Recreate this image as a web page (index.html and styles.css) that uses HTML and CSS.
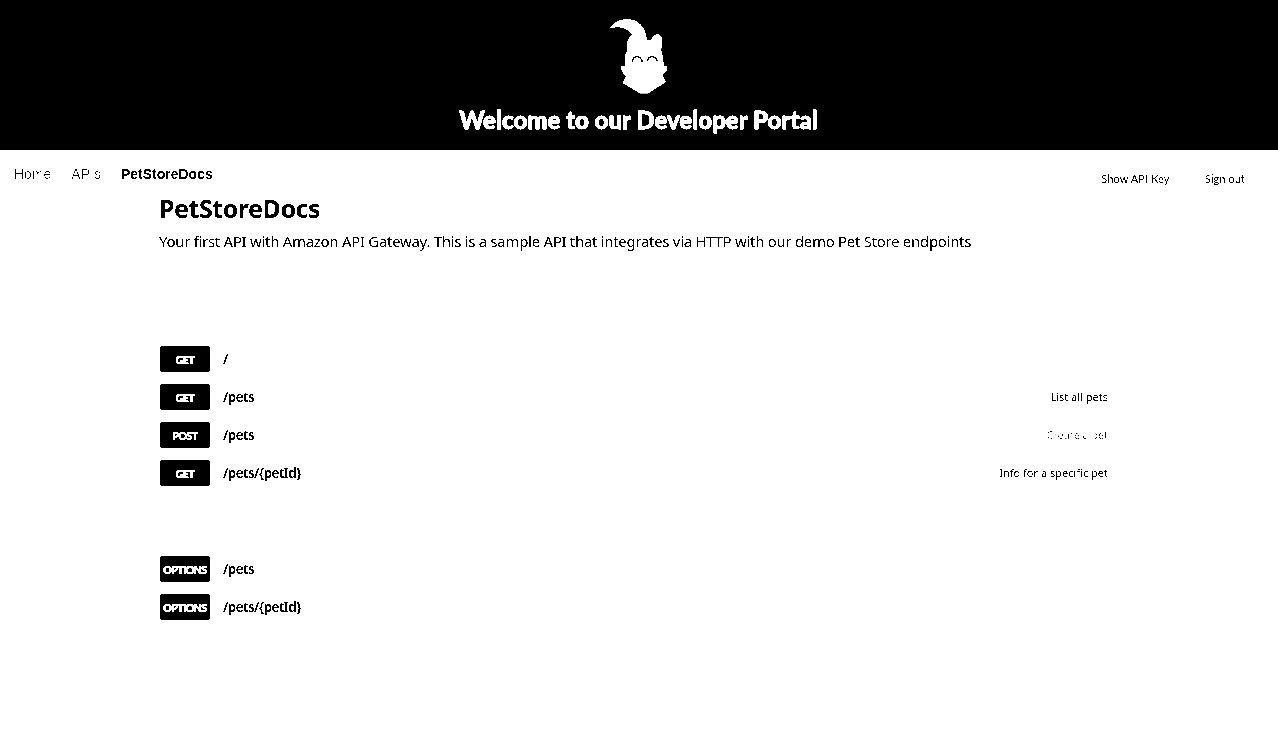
FILE: index.html
```html
<!DOCTYPE html>
<html lang="en">
<head>
<meta charset="utf-8">
<title>Developer Portal</title>
<link rel="stylesheet" href="styles.css">
</head>
<body>
<div class="page">
  <header class="hero">
    <svg class="logo" width="60" height="77" viewBox="0 0 60 77">
      <path fill="#fff" d="M0 11C4 5 10 1 18 1c12 0 19 9 20 21h4c1-3 4-6 7-6 3 1 4 3 4 6v7l-1 3c2 4 2 9 3 16h3v5l-4 3v2l3 6-18 11.500h-8L13.500 65l3.500-7c-3-2-5-5-5-10h4c-1-7 0-12 2.500-16-1-6-1-11 4.500-15C19 10 10 7 0 11Z"/>
      <path fill="none" stroke="#000" stroke-width="1.300" d="M23.500 44v-2c2-4.500 7-4.500 9.500 0.500V44M38.500 43v-1c2-4.500 7-4.500 9.500 0v1"/>
    </svg>
    <h1 class="hero-title">Welcome to our Developer Portal</h1>
  </header>
  <nav class="nav">
    <a class="nav-link">Home</a>
    <a class="nav-link nav-apis">APIs</a>
    <a class="nav-link active">PetStoreDocs</a>
    <span class="account"><a>Show API Key</a><a>Sign out</a></span>
  </nav>
  <main class="docs">
    <h2 class="docs-title">PetStoreDocs</h2>
    <p class="docs-text">Your first API with Amazon API Gateway. This is a sample API that integrates via HTTP with our demo Pet Store endpoints</p>
    <section class="ops">
      <div class="op"><span class="method">GET</span><span class="path">/</span></div>
      <div class="op"><span class="method">GET</span><span class="path">/pets</span><span class="summary">List all pets</span></div>
      <div class="op"><span class="method">POST</span><span class="path">/pets</span><span class="summary faint">Create a pet</span></div>
      <div class="op"><span class="method">GET</span><span class="path">/pets/{petId}</span><span class="summary">Info for a specific pet</span></div>
    </section>
    <section class="ops ops-more">
      <div class="op"><span class="method">OPTIONS</span><span class="path">/pets</span></div>
      <div class="op"><span class="method">OPTIONS</span><span class="path">/pets/{petId}</span></div>
    </section>
  </main>
</div>
</body>
</html>
```
FILE: styles.css
```css
* { box-sizing: border-box; }
body { margin: 0; background: #fff; }
.page { height: 754px; overflow: hidden; background: #fff; color: #000; filter: contrast(100); }
.hero { height: 150px; background: #000; color: #fff; display: flex; flex-direction: column; align-items: center; padding-top: 18px; }
.logo { display: block; flex: none; }
.hero-title { margin: 10px 0 0; padding-right: 1px; font: 900 24px/30px Lato, sans-serif; white-space: nowrap; -webkit-text-stroke: 0.8px #fff; }
.nav { height: 43px; padding: 14px 33px 0 14px; display: flex; align-items: flex-start; gap: 20px; font: 14px/20px "Liberation Sans", Arial, sans-serif; }
.nav-link { color: #5c5c5c; }
.active { font-weight: 700; color: #000; }
.account { margin-left: auto; display: flex; gap: 35px; padding-top: 5px; font: 11px/20px Lato, sans-serif; letter-spacing: 0.1px; color: #111; }
.docs { padding: 0 170px 0 159px; font-family: "Noto Sans", sans-serif; }
.docs-title { margin: 0; font-size: 25px; line-height: 30px; letter-spacing: -0.45px; }
.docs-text { margin: 8px 0 0; font-size: 15px; line-height: 20px; letter-spacing: -0.305px; white-space: nowrap; }
.ops { margin-top: 95px; display: grid; gap: 12px; }
.ops-more { margin-top: 70px; }
.op { height: 26px; display: flex; align-items: center; padding-left: 1px; }
.method { width: 50px; height: 26px; border-radius: 3px; background: #000; color: #fff; text-align: center; font: 900 10.5px/28px Lato, sans-serif; letter-spacing: -0.5px; -webkit-text-stroke: 0.5px #fff; }
.path { margin-left: 13px; font-size: 13.5px; font-weight: 600; line-height: 26px; height: 26px; letter-spacing: -0.55px; }
.summary { margin-left: auto; font-size: 11px; line-height: 26px; color: #151515; }
.faint { color: #686868; letter-spacing: -0.1px; }
```
